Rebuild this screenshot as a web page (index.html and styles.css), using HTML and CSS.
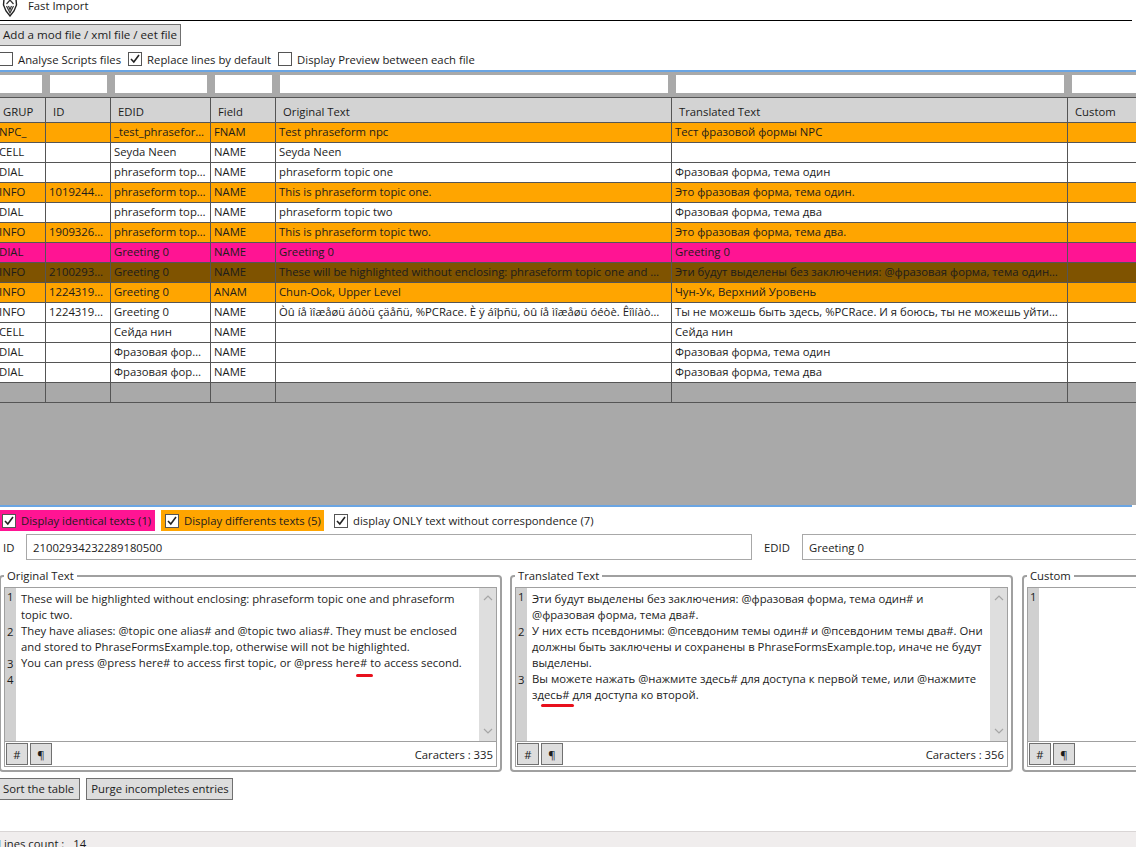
FILE: index.html
```html
<!DOCTYPE html>
<html lang="en">
<head>
<meta charset="utf-8">
<title>Fast Import</title>
<link rel="stylesheet" href="styles.css">
</head>
<body>
<div class="app">
  <header class="title">
    <svg class="logo" width="16" height="18" viewBox="0 0 16 18"><path d="M2 0 L1.5 6 L4 12 L8 17 L12 12 L14.5 6 L14 0" fill="none" stroke="#222" stroke-width="1.4"/><path d="M4.5 5 L8 1 L11.5 5 M4.5 7 L8 14 L11.5 7 M6.5 7 L8 10.5 L9.5 7" fill="none" stroke="#333" stroke-width="1.2"/></svg>
    <span>Fast Import</span>
  </header>

  <div class="btnrow"><button class="btn add">Add a mod file / xml file / eet file</button></div>

  <div class="opts">
    <label class="chk"><span class="box"></span>Analyse Scripts files</label>
    <label class="chk"><span class="box"><svg viewBox="0 0 12 12"><path d="M2 6 L4.8 9 L10 2" fill="none" stroke="#222" stroke-width="1.6"/></svg></span>Replace lines by default</label>
    <label class="chk"><span class="box"></span>Display Preview between each file</label>
  </div>

  <section class="gridarea">
    <div class="filters">
      <i class="f f1"></i><i class="f f2"></i><i class="f f3"></i><i class="f f2"></i><i class="f f5"></i><i class="f f5"></i><i class="f f7"></i>
    </div>
    <div class="row head"><div>GRUP</div><div>ID</div><div>EDID</div><div>Field</div><div>Original Text</div><div>Translated Text</div><div>Custom</div></div>
    <div class="row or"><div>NPC_</div><div></div><div>_test_phraseform npc</div><div>FNAM</div><div>Test phraseform npc</div><div>Тест фразовой формы NPC</div><div></div></div>
    <div class="row"><div>CELL</div><div></div><div>Seyda Neen</div><div>NAME</div><div>Seyda Neen</div><div></div><div></div></div>
    <div class="row"><div>DIAL</div><div></div><div>phraseform topic one</div><div>NAME</div><div>phraseform topic one</div><div>Фразовая форма, тема один</div><div></div></div>
    <div class="row or"><div>INFO</div><div>10192443212</div><div>phraseform topic one</div><div>NAME</div><div>This is phraseform topic one.</div><div>Это фразовая форма, тема один.</div><div></div></div>
    <div class="row"><div>DIAL</div><div></div><div>phraseform topic two</div><div>NAME</div><div>phraseform topic two</div><div>Фразовая форма, тема два</div><div></div></div>
    <div class="row or"><div>INFO</div><div>19093262134</div><div>phraseform topic two</div><div>NAME</div><div>This is phraseform topic two.</div><div>Это фразовая форма, тема два.</div><div></div></div>
    <div class="row pk"><div>DIAL</div><div></div><div>Greeting 0</div><div>NAME</div><div>Greeting 0</div><div>Greeting 0</div><div></div></div>
    <div class="row br"><div>INFO</div><div>21002934232</div><div>Greeting 0</div><div>NAME</div><div>These will be highlighted without enclosing: phraseform topic one and phraseform topic two.</div><div>Эти будут выделены без заключения: @фразовая форма, тема один# и @фразовая форма, тема два#.</div><div></div></div>
    <div class="row or"><div>INFO</div><div>12243195212</div><div>Greeting 0</div><div>ANAM</div><div>Chun-Ook, Upper Level</div><div>Чун-Ук, Верхний Уровень</div><div></div></div>
    <div class="row"><div>INFO</div><div>12243195213</div><div>Greeting 0</div><div>NAME</div><div>Òû íå ìîæåøü áûòü çäåñü, %PCRace. È ÿ áîþñü, òû íå ìîæåøü óéòè. Êîìíàòà çàêðûòà íà ýòîò ðàç.</div><div>Ты не можешь быть здесь, %PCRace. И я боюсь, ты не можешь уйти. Комната закрыта.</div><div></div></div>
    <div class="row"><div>CELL</div><div></div><div>Сейда нин</div><div>NAME</div><div></div><div>Сейда нин</div><div></div></div>
    <div class="row"><div>DIAL</div><div></div><div>Фразовая форма, тема один</div><div>NAME</div><div></div><div>Фразовая форма, тема один</div><div></div></div>
    <div class="row"><div>DIAL</div><div></div><div>Фразовая форма, тема два</div><div>NAME</div><div></div><div>Фразовая форма, тема два</div><div></div></div>
    <div class="row blank"><div></div><div></div><div></div><div></div><div></div><div></div><div></div></div>
  </section>

  <div class="legend">
    <label class="chk tag pink"><span class="box"><svg viewBox="0 0 12 12"><path d="M2 6 L4.8 9 L10 2" fill="none" stroke="#222" stroke-width="1.6"/></svg></span>Display identical texts (1)</label>
    <label class="chk tag orange"><span class="box"><svg viewBox="0 0 12 12"><path d="M2 6 L4.8 9 L10 2" fill="none" stroke="#222" stroke-width="1.6"/></svg></span>Display differents texts (5)</label>
    <label class="chk tag plain"><span class="box"><svg viewBox="0 0 12 12"><path d="M2 6 L4.8 9 L10 2" fill="none" stroke="#222" stroke-width="1.6"/></svg></span>display ONLY text without correspondence (7)</label>
  </div>

  <div class="ids">
    <span class="idl">ID</span><div class="inp idv">21002934232289180500</div>
    <span class="edl">EDID</span><div class="inp edv">Greeting 0</div>
  </div>

  <div class="groups">
    <fieldset class="gb g1">
      <legend>Original Text</legend>
      <div class="inner">
        <div class="editor">
          <div class="gutter"><b class="lf">1</b><b class="l2">2</b><b class="l1">3</b><b class="l1">4</b></div>
          <div class="text">These will be highlighted without enclosing: phraseform topic one and phraseform<br>topic two.<br>They have aliases: @topic one alias# and @topic two alias#. They must be enclosed<br>and stored to PhraseFormsExample.top, otherwise will not be highlighted.<br>You can press @press here# to access first topic, or @press here# to access second.</div>
          <div class="sb"><svg width="12" height="8" viewBox="0 0 12 8"><path d="M2 6 L6 2 L10 6" fill="none" stroke="#a6a6a6" stroke-width="1.2"/></svg><svg width="12" height="8" viewBox="0 0 12 8"><path d="M2 2 L6 6 L10 2" fill="none" stroke="#a6a6a6" stroke-width="1.2"/></svg></div>
          <span class="mark m1"></span>
        </div>
        <div class="foot"><button class="mini">#</button><button class="mini">¶</button><span class="count">Caracters : 335</span></div>
      </div>
    </fieldset>
    <fieldset class="gb g2">
      <legend>Translated Text</legend>
      <div class="inner">
        <div class="editor">
          <div class="gutter"><b class="lf">1</b><b class="l3">2</b><b class="l2">3</b></div>
          <div class="text">Эти будут выделены без заключения: @фразовая форма, тема один# и<br>@фразовая форма, тема два#.<br>У них есть псевдонимы: @псевдоним темы один# и @псевдоним темы два#. Они<br>должны быть заключены и сохранены в PhraseFormsExample.top, иначе не будут<br>выделены.<br>Вы можете нажать @нажмите здесь# для доступа к первой теме, или @нажмите<br>здесь# для доступа ко второй.</div>
          <div class="sb"><svg width="12" height="8" viewBox="0 0 12 8"><path d="M2 6 L6 2 L10 6" fill="none" stroke="#a6a6a6" stroke-width="1.2"/></svg><svg width="12" height="8" viewBox="0 0 12 8"><path d="M2 2 L6 6 L10 2" fill="none" stroke="#a6a6a6" stroke-width="1.2"/></svg></div>
          <span class="mark m2"></span>
        </div>
        <div class="foot"><button class="mini">#</button><button class="mini">¶</button><span class="count">Caracters : 356</span></div>
      </div>
    </fieldset>
    <fieldset class="gb g3">
      <legend>Custom</legend>
      <div class="inner">
        <div class="editor">
          <div class="gutter"><b class="lf">1</b></div>
          <div class="text"></div>
        </div>
        <div class="foot"><button class="mini">#</button><button class="mini">¶</button></div>
      </div>
    </fieldset>
  </div>

  <div class="actions"><button class="btn sort">Sort the table</button><button class="btn purge">Purge incompletes entries</button></div>

  <footer class="status"><span>Lines count :</span><span>14</span></footer>
</div>
</body>
</html>
```

FILE: styles.css
```css
html, body { margin: 0; padding: 0; background: #fff; }
body { width: 1136px; height: 847px; overflow: hidden; }
.app {
  width: 1136px; height: 847px; margin-left: -4px; display: flex; flex-direction: column;
  font-family: "Open Sans", "Liberation Sans", sans-serif; font-size: 11.3px; color: #1c1c1c;
}
.title { height: 20px; border-bottom: 1px solid #000; display: flex; align-items: center; overflow: hidden; flex: none; }
.logo { margin: -4px 0 0 6px; }
.title span { margin-left: 10px; margin-top: -10px; }
.btn {
  font: inherit; color: inherit; background: #dddddd; border: 1px solid #707070; height: 22px; padding: 0 3px 2px; margin: 0;
}
.add { font-size: 11.6px; }
.sort { padding-right: 5px; }
.purge { padding-left: 4px; padding-right: 3px; }
.btnrow { padding: 3px 0 0 3px; height: 22px; flex: none; }
.opts { display: flex; margin-top: 6px; height: 14px; gap: 7px; padding-left: 3px; margin-bottom: 4px; flex: none; }
.chk { display: flex; align-items: center; white-space: nowrap; }
.box {
  width: 12px; height: 12px; border: 1px solid #555; background: #fff; margin-right: 5px; display: block; flex: none;
}
.box svg { display: block; width: 12px; height: 12px; }
.gridarea { height: 433px; border-top: 2px solid #6aa5e3; background: #a9a9a9; overflow: hidden; flex: none; margin-right: -30px; }
.filters { display: flex; gap: 8px; padding-top: 3px; height: 18px; padding-bottom: 4px; }
.f { display: block; background: #fff; height: 18px; flex: none; }
.f1 { width: 46px; } .f2 { width: 57px; } .f3 { width: 92px; } .f5 { width: 388px; } .f7 { width: 70px; }
.row {
  display: grid; grid-template-columns: 50px 65px 100px 65px 396px 396px 88px; height: 19px; border-bottom: 1px solid #555; background: #fff;
}
.row > div {
  border-right: 1px solid #555; padding: 0 2px 0 3px; line-height: 17px; overflow: hidden; white-space: nowrap; text-overflow: ellipsis; min-width: 0;
}
.row > div:first-child { padding-left: 3px; }
.row > div:nth-child(5), .row > div:nth-child(6) { padding-right: 9px; }
.row.head { height: 24px; border-top: 1px solid #555; background: #d3d3d3; }
.row.head > div { line-height: 27px; padding-left: 7px; }
.or { background: #ffa500; }
.pk { background: #ff1493; }
.br { background: #7f5300; }
.blank { background: #a9a9a9; }
.legend { border-top: 2px solid #6aa5e3; height: 21px; padding-top: 3px; display: flex; padding-left: 4px; flex: none; }
.tag { height: 21px; box-sizing: border-box; }
.pink { background: #ff1493; width: 155px; padding-left: 2px; }
.orange { background: #ffa500; margin-left: 6px; width: 163px; padding-left: 4px; }
.plain { margin-left: 10px; }
.ids { display: flex; align-items: center; height: 26px; margin-top: 3px; padding-left: 7px; flex: none; }
.inp { border: 1px solid #a8a8a8; height: 24px; line-height: 25px; padding-left: 6px; flex: none; }
.idl { width: 23px; flex: none; }
.idv { width: 718px; }
.edl { margin-left: 12px; width: 38px; flex: none; }
.edv { width: 400px; }
.groups { display: flex; height: 211px; flex: none; padding-top: 9px; box-sizing: border-box; }
.gb {
  margin: 0; padding: 0 3px 3px; box-sizing: border-box; border: 2px solid #a0a0a0; border-radius: 4px; min-width: 0; flex: none; align-self: flex-start;
}
.gb legend { padding: 0 3px; margin-left: 0; line-height: 14px; height: 14px; margin-top: -5px; margin-bottom: -2px; }
.g1 { width: 503px; margin-left: 3px; }
.g2 { width: 503px; margin-left: 8px; }
.g3 { width: 150px; margin-left: 9px; }
.inner { border: 1px solid #a0a0a0; height: 178px; display: flex; flex-direction: column; margin-top: 6px; }
.editor { height: 153px; display: flex; position: relative; border-bottom: 1px solid #a0a0a0; flex: none; }
.gutter { width: 11px; background: #d0d0d0; flex: none; padding-top: 1px; box-sizing: border-box; }
.gutter b { display: block; font-weight: 400; padding-left: 2px; line-height: 16px; }
.lf { height: 35px; } .l1 { height: 16px; } .l2 { height: 32px; } .l3 { height: 48px; }
.text { flex: 1; padding: 3px 0 0 5px; line-height: 16px; white-space: nowrap; overflow: hidden; }
.sb { width: 17px; background: #dedede; flex: none; display: flex; flex-direction: column; justify-content: space-between; align-items: center; padding: 6px 0; box-sizing: border-box; }
.sb svg { display: block; }
.mark { position: absolute; background: #e8101c; border-radius: 2px; }
.m1 { left: 351px; top: 86px; width: 17px; height: 3px; }
.m2 { left: 25px; top: 116px; width: 33px; height: 3px; }
.foot { display: flex; align-items: center; flex: 1; padding-left: 1px; gap: 2px; }
.mini { width: 22px; height: 22px; font: inherit; color: inherit; background: #dddddd; border: 1px solid #707070; padding: 0; margin: 0; }
.count { margin-left: auto; padding-right: 3px; }
.actions { display: flex; gap: 6px; margin-top: 7px; height: 22px; padding-left: 3px; flex: none; }
.status {
  margin-top: 31px; height: 16px; background: #f0eded; border-top: 1px solid #d9d5d5; display: flex; gap: 9px; padding-left: 2px; overflow: hidden; line-height: 24px; flex: none; margin-right: -4px;
}
```
